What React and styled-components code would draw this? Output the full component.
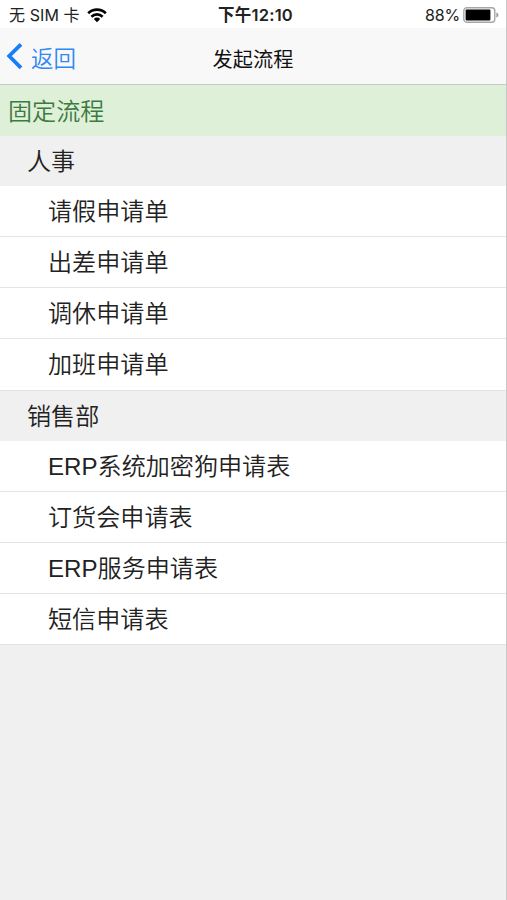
import React from 'react';
import styled, {createGlobalStyle} from 'styled-components';

const groups = [
  {
    name: '人事',
    items: ['请假申请单', '出差申请单', '调休申请单', '加班申请单'],
  },
  {
    name: '销售部',
    items: [
      'ERP系统加密狗申请表',
      '订货会申请表',
      'ERP服务申请表',
      '短信申请表',
    ],
  },
];

const App = () => {
  return (
    <ScreenStyle>
      <GlobalStyle />
      <StatusBarStyle>
        <CarrierStyle>
          <span>无 SIM 卡</span>
          <WifiIcon />
        </CarrierStyle>
        <ClockStyle>下午12:10</ClockStyle>
        <PowerStyle>
          <span>88%</span>
          <BatteryIcon />
        </PowerStyle>
      </StatusBarStyle>

      <NavBarStyle>
        <BackButton type="button">
          <BackIcon />
          <span>返回</span>
        </BackButton>
        <TitleStyle>发起流程</TitleStyle>
      </NavBarStyle>

      <main>
        <SectionStyle>固定流程</SectionStyle>
        {groups.map((group) => (
          <div key={group.name}>
            <GroupStyle>{group.name}</GroupStyle>
            <ListStyle>
              {group.items.map((item) => (
                <ItemStyle key={item}>{item}</ItemStyle>
              ))}
            </ListStyle>
          </div>
        ))}
      </main>
    </ScreenStyle>
  );
};

export default App;

const WifiIcon = () => (
  <svg width="20" height="15" viewBox="0 0 20 15">
    <g fill="none" stroke="#000" strokeWidth="2.6">
      <path d="M1.2 5.2a12.6 12.6 0 0 1 17.6 0" />
      <path d="M4.4 8.7a8 8 0 0 1 11.2 0" />
    </g>
    <path d="M10 14.2l-3.2-3.3a4.6 4.6 0 0 1 6.4 0z" />
  </svg>
);

const BatteryIcon = () => (
  <svg width="36" height="16" viewBox="0 0 36 16">
    <rect
      x="0.8"
      y="0.8"
      width="31"
      height="14.4"
      rx="3"
      fill="#fff"
      stroke="#a6a6a6"
      strokeWidth="1.4"
    />
    <rect x="2.6" y="2.6" width="24.8" height="10.8" rx="0.8" />
    <path d="M33.4 5.4c2.6 1 2.6 4.2 0 5.2z" fill="#999" />
  </svg>
);

const BackIcon = () => (
  <svg width="17" height="27" viewBox="0 0 17 27">
    <path
      d="M15 1.4L3.2 13l11.8 11.8"
      fill="none"
      stroke="#167efb"
      strokeWidth="3.8"
    />
  </svg>
);

const GlobalStyle = createGlobalStyle`
  body {
    margin: 0;
    background: #f0f0f0;
  }
`;

const ScreenStyle = styled.div`
  box-sizing: border-box;
  min-height: 900px;
  border-right: 1px solid #c8c8c8;
  background: #f0f0f0;
  color: #222;
  font-family: 'Liberation Sans', 'Noto Sans CJK SC', sans-serif;
`;

const StatusBarStyle = styled.header`
  display: grid;
  grid-template-columns: 1fr auto 1fr;
  align-items: center;
  box-sizing: border-box;
  height: 28px;
  padding: 2px 7px 0 9px;
  background: #fff;
  font-family: Inter, 'Noto Sans CJK SC', sans-serif;
  font-size: 16px;
  line-height: 24px;
`;

const CarrierStyle = styled.div`
  display: flex;
  align-items: center;
  gap: 7px;
  letter-spacing: 0.1px;
`;

const ClockStyle = styled.div`
  padding-left: 3px;
  font-size: 16.5px;
  font-weight: 600;
  letter-spacing: 0.2px;
`;

const PowerStyle = styled.div`
  display: flex;
  align-items: center;
  justify-content: flex-end;
  gap: 3px;
  letter-spacing: -0.2px;
`;

const NavBarStyle = styled.nav`
  display: grid;
  grid-template-columns: 1fr auto 1fr;
  align-items: center;
  box-sizing: border-box;
  height: 57px;
  padding: 4px 6px 0;
  border-bottom: 1px solid #c5c8ca;
  background: #f8f8f8;
`;

const BackButton = styled.button`
  display: flex;
  align-items: center;
  gap: 8px;
  margin-top: -3px;
  padding: 0;
  border: 0;
  background: none;
  color: #2f88f5;
  font-family: inherit;
  font-size: 22.5px;
  font-weight: 350;
  line-height: 30px;

  span {
    margin: 5px 0 -1px;
  }
`;

const TitleStyle = styled.h1`
  margin: 0;
  padding-top: 3px;
  color: #111;
  font-size: 20.2px;
  font-weight: 400;
  line-height: 30px;
`;

const RowStyle = styled.div`
  box-sizing: border-box;
  font-size: 24.1px;
  font-weight: 350;
  line-height: 52px;
  white-space: nowrap;
`;

const SectionStyle = styled(RowStyle)`
  height: 51px;
  padding-left: 8px;
  background: #dff0d8;
  color: #3c7a40;
  line-height: 53px;
`;

const GroupStyle = styled(RowStyle)`
  height: 50px;
  padding-left: 27px;
  background: #f0f0f0;
`;

const ListStyle = styled.ul`
  margin: 0;
  padding: 0;
  list-style: none;
`;

const ItemStyle = styled(RowStyle).attrs({as: 'li'})`
  height: 51.15px;
  padding-left: 48px;
  border-bottom: 1px solid #e4e4e4;
  background: #fff;
`;
